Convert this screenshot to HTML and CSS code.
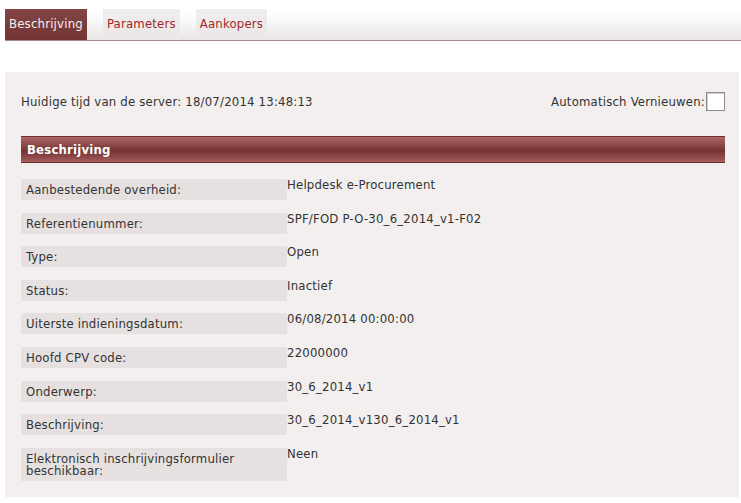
FILE: index.html
```html
<!DOCTYPE html>
<html lang="nl">
<head>
    <meta charset="UTF-8">
    <title>Beschrijving</title>
    <link rel="stylesheet" href="styles.css">
</head>
<body>
    <div class="tabs">
        <a class="tab active" href="#">Beschrijving</a>
        <a class="tab" href="#">Parameters</a>
        <a class="tab" href="#">Aankopers</a>
    </div>

    <div class="panel">
        <div class="server-row">
            <span>Huidige tijd van de server: 18/07/2014 13:48:13</span>
            <label class="refresh">Automatisch Vernieuwen:<span class="checkbox"></span></label>
        </div>

        <div class="section-title">Beschrijving</div>

        <div class="details">
            <div class="label">Aanbestedende overheid:</div>
            <div class="value">Helpdesk e-Procurement</div>

            <div class="label">Referentienummer:</div>
            <div class="value">SPF/FOD P-O-30_6_2014_v1-F02</div>

            <div class="label">Type:</div>
            <div class="value">Open</div>

            <div class="label">Status:</div>
            <div class="value">Inactief</div>

            <div class="label">Uiterste indieningsdatum:</div>
            <div class="value">06/08/2014 00:00:00</div>

            <div class="label">Hoofd CPV code:</div>
            <div class="value">22000000</div>

            <div class="label">Onderwerp:</div>
            <div class="value">30_6_2014_v1</div>

            <div class="label">Beschrijving:</div>
            <div class="value">30_6_2014_v130_6_2014_v1</div>

            <div class="label">Elektronisch inschrijvingsformulier beschikbaar:</div>
            <div class="value">Neen</div>
        </div>
    </div>
</body>
</html>
```

FILE: styles.css
```css
body {
    margin: 0;
    background: #fff;
    font-family: 'DejaVu Sans Condensed', 'DejaVu Sans', sans-serif;
    font-size: 13px;
    letter-spacing: 0.2px;
    color: #333;
}

.tabs {
    display: flex;
    gap: 16px;
    height: 31px;
    margin: 9px 0 0 5px;
    border-bottom: 1px solid #a48c8c;
    background: linear-gradient(to bottom, #fff 0%, #fbfafa 30%, #e9e5e5 100%);
}

.tab {
    display: flex;
    align-items: center;
    padding: 0 4px 2px;
    text-decoration: none;
    color: #a3262a;
    background: linear-gradient(to bottom, #f0eded, #ebe7e7);
}

.tab.active {
    color: #f7efef;
    background: linear-gradient(to bottom, #824444, #733434);
}

.panel {
    margin: 31px 2px 0 5px;
    padding: 19px 14px 16px 16px;
    background: #f2efee;
}

.server-row {
    display: flex;
    justify-content: space-between;
    align-items: center;
    height: 20px;
}

.refresh {
    display: flex;
    align-items: center;
}

.checkbox {
    width: 17px;
    height: 17px;
    border: 1px solid #8d8d8d;
    background: #fff;
    box-shadow: inset 1px 1px 0 #cfcfcf;
    margin-left: 1px;
}

.section-title {
    margin-top: 25px;
    height: 25px;
    line-height: 25px;
    padding-left: 6px;
    border-top: 1px solid #6a2e2e;
    border-bottom: 1px solid #6a2e2e;
    background: linear-gradient(to bottom, #b06868 0%, #8a4545 35%, #743535 55%, #8e4848 80%, #a86060 100%);
    color: #fff;
    font-weight: bold;
}

.details {
    display: grid;
    grid-template-columns: 266px 1fr;
    row-gap: 12.6px;
    margin-top: 16px;
}

.label {
    padding: 5px 5px 4px;
    line-height: 12px;
    background: #e6e1e0;
}

.value {
    margin-top: -2px;
    line-height: 16px;
}
```
